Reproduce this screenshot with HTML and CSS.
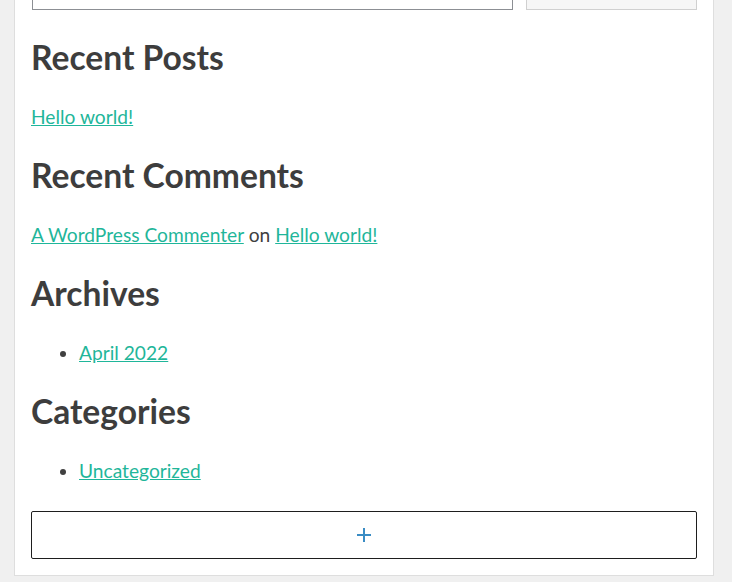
FILE: index.html
```html
<!DOCTYPE html>
<html lang="en">
<head>
<meta charset="utf-8">
<title>Widgets</title>
<link rel="stylesheet" href="styles.css">
</head>
<body>
<div class="panel">
  <form class="search">
    <input class="search-input" type="search" aria-label="Search">
    <button class="search-button" type="button"></button>
  </form>
  <section class="widget">
    <h2>Recent Posts</h2>
    <p><a href="#">Hello world!</a></p>
  </section>
  <section class="widget">
    <h2>Recent Comments</h2>
    <p><a href="#">A WordPress Commenter</a> on <a href="#">Hello world!</a></p>
  </section>
  <section class="widget">
    <h2>Archives</h2>
    <ul><li><a href="#">April 2022</a></li></ul>
  </section>
  <section class="widget">
    <h2>Categories</h2>
    <ul><li><a href="#">Uncategorized</a></li></ul>
  </section>
  <button class="add-block" type="button" aria-label="Add block">
    <svg width="14" height="14" viewBox="0 0 14 14"><path d="M6 0h2v6h6v2H8v6H6V8H0V6h6z" fill="#3a8cc4"/></svg>
  </button>
</div>
</body>
</html>
```
FILE: styles.css
```css
html, body {
  margin: 0;
  padding: 0;
  background: #f0f0f0;
}
body {
  font-family: Lato, "Open Sans", sans-serif;
  color: #404040;
  overflow: hidden;
}
.panel {
  box-sizing: border-box;
  width: 700px;
  margin: -31px 0 0 14px;
  padding: 0 16px 16px;
  background: #fff;
  border: 1px solid #dedede;
}
.search {
  display: flex;
  gap: 13px;
  height: 40px;
  margin: 0 0 26.84px 1px;
}
.search-input {
  box-sizing: border-box;
  flex: 1;
  height: 40px;
  margin: 0;
  border: 1px solid #8c8f94;
  background: #fff;
}
.search-button {
  box-sizing: border-box;
  width: 171px;
  height: 40px;
  margin: 0;
  border: 1px solid #d0d0d0;
  background: #f6f6f6;
}
.widget h2 {
  margin: 0 0 26px;
  font-size: 33.6px;
  line-height: 1.2;
  font-weight: 700;
  color: #3d3d3d;
}
.widget p,
.widget ul {
  margin: 0 0 22.87px;
  font-size: 19.2px;
  line-height: 28.8px;
}
.widget ul {
  padding-left: 48px;
}
.widget a {
  color: #1fb69a;
  text-decoration: underline;
}
.add-block {
  box-sizing: border-box;
  display: flex;
  align-items: center;
  justify-content: center;
  width: 100%;
  height: 48px;
  margin: 24.87px 0 0;
  padding: 0;
  background: #fff;
  border: 1px solid #1e1e1e;
  border-radius: 2px;
}
```
